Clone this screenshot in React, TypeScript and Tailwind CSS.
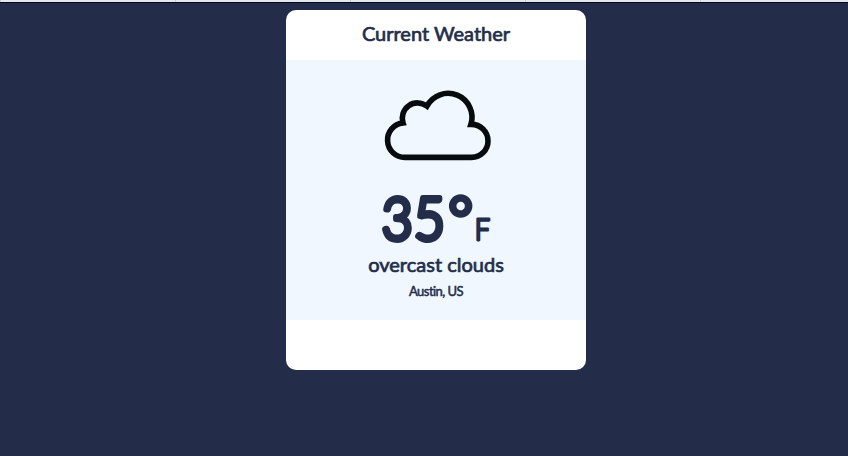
function CloudIcon() {
  return (
    <svg className="block h-[90px] w-[130px] shrink-0" viewBox="0 0 130 90" fill="none" aria-hidden="true">
      <path
        d="M29 77.4A17.3 17.3 0 0 1 27 42.9A15.3 15.3 0 0 1 50.9 26.1A23.93 23.93 0 0 1 94.9 44.4A16.6 16.6 0 0 1 112 61A16.4 16.4 0 0 1 95.6 77.4Z"
        stroke="#080b0e"
        strokeWidth="5.6"
      />
    </svg>
  );
}

function Temperature() {
  return (
    <svg
      className="block h-[76px] w-[140px] shrink-0 overflow-visible font-['Lato',sans-serif]"
      viewBox="-5 -6 140 76"
      fill="#232d49"
      stroke="#232d49"
      strokeLinejoin="round"
      strokeLinecap="round"
    >
      <text x="12.1 48.2" y="57.5" fontSize="60" fontWeight="300" strokeWidth="6" transform="scale(0.89 1)">
        35
      </text>
      <text x="77.3" y="57.5" fontSize="60" fontWeight="300" strokeWidth="5.4">
        °
      </text>
      <text x="115.3" y="58.4" fontSize="30" fontWeight="300" strokeWidth="2.8" transform="scale(0.9 1)">
        F
      </text>
    </svg>
  );
}

export default function App() {
  return (
    <div className="flex h-[456px] w-[848px] flex-col overflow-hidden bg-[#232d49] font-['Lato',sans-serif] text-[#232d49]">
      <div className="flex h-[3px] shrink-0 border-b border-[#020620] bg-[#e6e9ea]">
        <div className="w-px bg-[#c8ccd0]" />
        <div className="w-[175px] border-r border-[#c8ccd0]" />
        <div className="w-[175px] border-r border-[#c8ccd0]" />
        <div className="w-[175px] border-r border-[#c8ccd0]" />
        <div className="w-[175px] border-r border-[#c8ccd0]" />
      </div>
      <main className="mt-[7px] ml-[286px] flex h-[360px] w-[300px] shrink-0 flex-col overflow-hidden rounded-[10px] bg-white">
        <header className="flex h-[50px] items-center justify-center pb-1">
          <h1 className="text-[20px] leading-[24px] font-normal whitespace-nowrap [-webkit-text-stroke:0.7px_#232d49]">Current Weather</h1>
        </header>
        <section className="flex h-[260px] flex-col items-center bg-[#f0f7ff] pt-5">
          <div className="flex w-full justify-center pl-[10px]">
            <CloudIcon />
          </div>
          <div className="mt-1.5 flex h-[76px]">
            <Temperature />
          </div>
          <p className="text-[20px] leading-6 whitespace-nowrap [-webkit-text-stroke:0.7px_#232d49]">overcast clouds</p>
          <p className="mt-[7px] text-[13px] leading-4 tracking-[-0.55px] whitespace-nowrap [font-variant-ligatures:none] [-webkit-text-stroke:0.5px_#232d49]">Austin, US</p>
        </section>
      </main>
    </div>
  );
}
